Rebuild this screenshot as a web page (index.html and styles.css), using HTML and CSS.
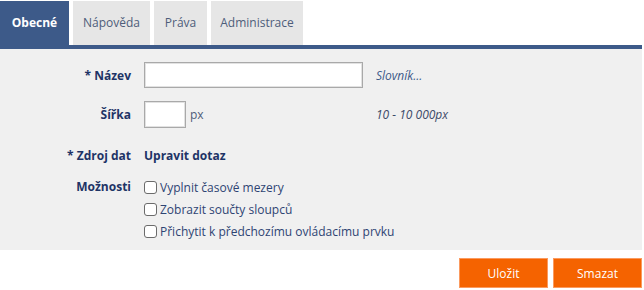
FILE: index.html
```html
<!DOCTYPE html>
<html lang="cs">
<head>
<meta charset="utf-8">
<title>Obecné</title>
<link rel="stylesheet" href="styles.css">
</head>
<body>
<div class="page">
  <nav class="tabs">
    <div class="tab active">Obecné</div>
    <div class="tab t-help">Nápověda</div>
    <div class="tab t-rights">Práva</div>
    <div class="tab t-admin">Administrace</div>
  </nav>
  <div class="bar"></div>
  <section class="panel">
    <div class="row r-name">
      <label class="lbl">* Název</label>
      <div class="field"><input class="txt wide" type="text"></div>
      <a class="hint link">Slovník...</a>
    </div>
    <div class="row r-width">
      <label class="lbl">Šířka</label>
      <div class="field"><input class="txt narrow" type="text"><span class="unit">px</span></div>
      <span class="hint">10 - 10 000px</span>
    </div>
    <div class="row r-src">
      <label class="lbl">* Zdroj dat</label>
      <div class="field"><a class="action">Upravit dotaz</a></div>
    </div>
    <div class="row r-opts">
      <label class="lbl opt-lbl">Možnosti</label>
      <div class="checks">
        <label class="chk"><input type="checkbox"><span>Vyplnit časové mezery</span></label>
        <label class="chk"><input type="checkbox"><span>Zobrazit součty sloupců</span></label>
        <label class="chk"><input type="checkbox"><span>Přichytit k předchozímu ovládacímu prvku</span></label>
      </div>
    </div>
  </section>
  <div class="buttons">
    <button class="btn">Uložit</button>
    <button class="btn">Smazat</button>
  </div>
</div>
</body>
</html>
```
FILE: styles.css
```css
html, body {
  margin: 0;
  padding: 0;
  background: #ffffff;
}
body {
  font-family: "Open Sans", "DejaVu Sans", sans-serif;
  font-size: 12px;
  color: #1e3466;
}
.page {
  width: 642px;
}
.tabs {
  display: flex;
  gap: 4px;
  height: 45px;
  padding-top: 1px;
  box-sizing: border-box;
}
.tab {
  display: flex;
  align-items: center;
  justify-content: center;
  background: #e6e6e6;
  color: #4e5d7a;
  font-size: 12px;
  padding-bottom: 1px;
  box-sizing: border-box;
}
.tab.active {
  width: 69px;
  background: #3d5a89;
  color: #ffffff;
  font-weight: bold;
}
.t-help { width: 77px; }
.t-rights { width: 53px; }
.t-admin { width: 92px; }
.bar {
  height: 4px;
  background: #3d5a89;
}
.panel {
  background: #f0f0f0;
  height: 201px;
  box-sizing: border-box;
  padding-top: 13px;
}
.row {
  display: grid;
  grid-template-columns: 131px 219px auto;
  column-gap: 13px;
  align-items: center;
}
.r-name { height: 26px; }
.r-width { height: 27px; margin-top: 13px; }
.r-src { height: 20px; margin-top: 17px; }
.r-opts { margin-top: 11px; align-items: start; }
.lbl {
  text-align: right;
  font-weight: bold;
  color: #1e3466;
}
.opt-lbl {
  line-height: 22px;
}
.field {
  display: flex;
  align-items: center;
  height: 100%;
}
.txt {
  margin: 0;
  padding: 0 4px;
  border: 1px solid #a9a9a9;
  box-shadow: inset 0 0 0 1px #e2e2e2;
  background: #ffffff;
  box-sizing: border-box;
  font: inherit;
}
.wide { width: 219px; height: 26px; }
.narrow { width: 42px; height: 27px; }
.unit {
  margin-left: 4px;
  color: #4e5d7a;
}
.hint {
  font-style: italic;
  color: #3c4a68;
}
.link {
  color: #3d5a89;
}
.action {
  font-weight: bold;
  color: #1e3466;
}
.checks {
  grid-column: 2 / 4;
  display: flex;
  flex-direction: column;
}
.chk {
  display: flex;
  align-items: center;
  height: 22px;
  color: #2e4473;
}
.chk input {
  appearance: none;
  -webkit-appearance: none;
  margin: 0 3px 0 0;
  width: 13px;
  height: 13px;
  border: 1px solid #6b6b6b;
  border-radius: 3px;
  background: #ffffff;
  box-sizing: border-box;
}
.buttons {
  display: flex;
  justify-content: flex-end;
  gap: 5px;
  margin-top: 8px;
}
.btn {
  width: 89px;
  height: 30px;
  background: #f56300;
  border: 1px solid #fb9a5e;
  color: #ffffff;
  font: inherit;
  font-size: 12px;
  padding: 0;
}
```
